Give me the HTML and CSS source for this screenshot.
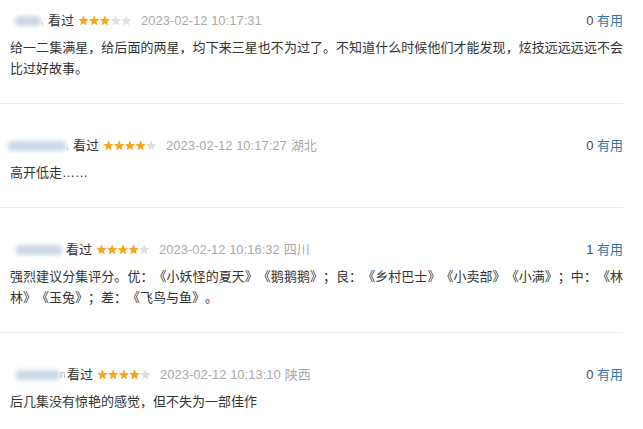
FILE: index.html
```html
<!DOCTYPE html>
<html lang="zh-CN">
<head>
<meta charset="UTF-8">
<meta name="viewport" content="width=device-width, initial-scale=1.0">
<title>短评</title>
<link rel="stylesheet" href="styles.css">
</head>

<body>
    <svg class="defs" width="0" height="0">
        <symbol id="star" viewBox="0 0 11 11">
            <polygon points="5.5,0.3 6.91,3.96 10.83,4.17 7.78,6.64 8.79,10.43 5.5,8.3 2.21,10.43 3.22,6.64 0.17,4.17 4.09,3.96"/>
        </symbol>
    </svg>

    <div class="comments">
        <div class="comment-item">
            <div class="comment-info">
                <span class="info-left">
                    <span class="user user-a"></span><span class="user-tail">,</span>
                    <span class="watched">看过</span>
                    <svg class="stars" width="54" height="11">
                        <use href="#star" x="0" width="11" height="11" class="on"/>
                        <use href="#star" x="10.7" width="11" height="11" class="on"/>
                        <use href="#star" x="21.4" width="11" height="11" class="on"/>
                        <use href="#star" x="32.1" width="11" height="11" class="off"/>
                        <use href="#star" x="42.8" width="11" height="11" class="off"/>
                    </svg>
                    <span class="time">2023-02-12 10:17:31</span>
                </span>
                <span class="votes"><span class="count">0</span> <span class="useful">有用</span></span>
            </div>
            <p class="comment-text">给一二集满星，给后面的两星，均下来三星也不为过了。不知道什么时候他们才能发现，炫技远远远远不会比过好故事。</p>
        </div>

        <div class="comment-item">
            <div class="comment-info">
                <span class="info-left">
                    <span class="user user-b"></span><span class="user-tail">,</span>
                    <span class="watched">看过</span>
                    <svg class="stars" width="54" height="11">
                        <use href="#star" x="0" width="11" height="11" class="on"/>
                        <use href="#star" x="10.7" width="11" height="11" class="on"/>
                        <use href="#star" x="21.4" width="11" height="11" class="on"/>
                        <use href="#star" x="32.1" width="11" height="11" class="on"/>
                        <use href="#star" x="42.8" width="11" height="11" class="off"/>
                    </svg>
                    <span class="time">2023-02-12 10:17:27</span>
                    <span class="place">湖北</span>
                </span>
                <span class="votes"><span class="count">0</span> <span class="useful">有用</span></span>
            </div>
            <p class="comment-text">高开低走……</p>
        </div>

        <div class="comment-item">
            <div class="comment-info">
                <span class="info-left">
                    <span class="user user-c"></span>
                    <span class="watched">看过</span>
                    <svg class="stars" width="54" height="11">
                        <use href="#star" x="0" width="11" height="11" class="on"/>
                        <use href="#star" x="10.7" width="11" height="11" class="on"/>
                        <use href="#star" x="21.4" width="11" height="11" class="on"/>
                        <use href="#star" x="32.1" width="11" height="11" class="on"/>
                        <use href="#star" x="42.8" width="11" height="11" class="off"/>
                    </svg>
                    <span class="time">2023-02-12 10:16:32</span>
                    <span class="place">四川</span>
                </span>
                <span class="votes"><span class="count">1</span> <span class="useful">有用</span></span>
            </div>
            <p class="comment-text">强烈建议分集评分。优：《小妖怪的夏天》《鹅鹅鹅》；良：《乡村巴士》《小卖部》《小满》；中：《林林》《玉兔》；差：《飞鸟与鱼》。</p>
        </div>

        <div class="comment-item">
            <div class="comment-info">
                <span class="info-left">
                    <span class="user user-d"></span><span class="user-tail">n</span>
                    <span class="watched">看过</span>
                    <svg class="stars" width="54" height="11">
                        <use href="#star" x="0" width="11" height="11" class="on"/>
                        <use href="#star" x="10.7" width="11" height="11" class="on"/>
                        <use href="#star" x="21.4" width="11" height="11" class="on"/>
                        <use href="#star" x="32.1" width="11" height="11" class="on"/>
                        <use href="#star" x="42.8" width="11" height="11" class="off"/>
                    </svg>
                    <span class="time">2023-02-12 10:13:10</span>
                    <span class="place">陕西</span>
                </span>
                <span class="votes"><span class="count">0</span> <span class="useful">有用</span></span>
            </div>
            <p class="comment-text">后几集没有惊艳的感觉，但不失为一部佳作</p>
        </div>
    </div>
</body>

</html>
```

FILE: styles.css
```css
body {
    margin: 0;
    background: #fff;
    font-family: "Liberation Sans", "Noto Sans CJK SC", sans-serif;
    font-size: 13px;
    color: #333;
    text-spacing-trim: space-all;
}

.defs {
    position: absolute;
    width: 0;
    height: 0;
}

.comments {
    width: 623px;
}

.comment-item {
    padding: 32px 0 24px 10px;
    border-bottom: 1px solid #ececec;
}

.comment-item:first-child {
    padding-top: 11px;
}

.comment-info {
    display: flex;
    justify-content: space-between;
    align-items: center;
    height: 20px;
    line-height: 20px;
}

.info-left {
    display: flex;
    align-items: center;
}

.user {
    display: inline-block;
    height: 10px;
    background: #ccd8e4;
    border-radius: 4px;
    filter: blur(2px);
}

.user-a {
    width: 26px;
    margin-left: 5px;
}

.user-b {
    width: 58px;
    margin-left: -2px;
}

.user-c {
    width: 46px;
    margin-left: 6px;
    margin-right: 2px;
}

.user-d {
    width: 44px;
    margin-left: 6px;
}

.user-tail {
    color: #9aa4ad;
    font-size: 10px;
    width: 5px;
    opacity: 0.7;
}

.watched {
    margin-left: 2px;
    color: #333;
}

.stars {
    margin-left: 4px;
    margin-top: -1px;
}

.stars .on {
    fill: #f7a51c;
}

.stars .off {
    fill: #dedede;
}

.time {
    margin-left: 9px;
    font-size: 13px;
    color: #aaa;
}

.place {
    margin-left: 4px;
    font-size: 13px;
    color: #aaa;
}

.votes {
    color: #494949;
}

.useful {
    color: #3377aa;
}

.comment-text {
    margin: 6px 0 0;
    line-height: 21px;
    color: #333;
    text-align: justify;
}
```
